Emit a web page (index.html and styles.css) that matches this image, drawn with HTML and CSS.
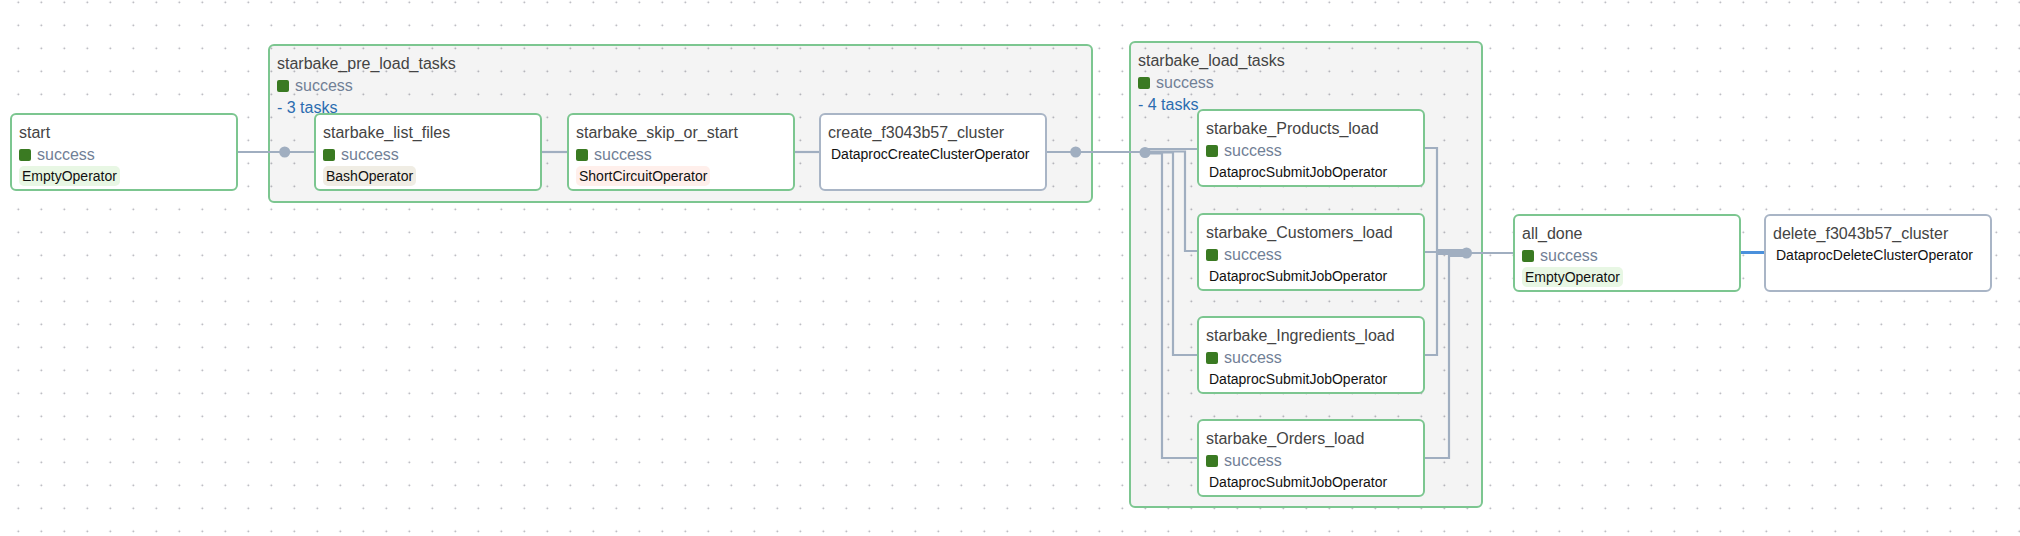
FILE: index.html
```html
<!DOCTYPE html>
<html>
<head>
<meta charset="utf-8">
<link rel="stylesheet" href="styles.css">
</head>
<body>
<div class="canvas">
  <div class="group g-pre">
    <div class="title">starbake_pre_load_tasks</div>
    <div class="state"><span class="sq"></span>success</div>
    <div class="tasks">- 3 tasks</div>
  </div>
  <div class="group g-load">
    <div class="title">starbake_load_tasks</div>
    <div class="state"><span class="sq"></span>success</div>
    <div class="tasks">- 4 tasks</div>
  </div>

  <svg class="edges" width="2020" height="536" viewBox="0 0 2020 536">
    <g fill="none" stroke="#a0aec0" stroke-width="2.2">
      <path d="M238 152 H314"/>
      <path d="M542 152 H567"/>
      <path d="M795 152 H819"/>
      <path d="M1047 152 H1145"/>
      <path d="M1145 149 H1197"/>
      <path d="M1145 151.5 H1185 V251 H1197"/>
      <path d="M1145 152.5 H1173 V355 H1197"/>
      <path d="M1145 153.5 H1162 V458 H1197"/>
      <path d="M1425 148 H1437 V250 H1466"/>
      <path d="M1425 252 H1466"/>
      <path d="M1425 355 H1437 V254 H1466"/>
      <path d="M1425 458 H1449 V256 H1466"/>
      <path d="M1466 253 H1513"/>
    </g>
    <g fill="#a0aec0">
      <circle cx="284.7" cy="152" r="5.5"/>
      <circle cx="1075.7" cy="152" r="5.5"/>
      <circle cx="1145" cy="152.5" r="5.5"/>
      <circle cx="1466.5" cy="253" r="5.5"/>
    </g>
    <path d="M1741 252.5 H1764" stroke="#4a90dc" stroke-width="3" fill="none"/>
  </svg>

  <div class="node n-start">
    <div class="title">start</div>
    <div class="state"><span class="sq"></span>success</div>
    <div class="op op-empty">EmptyOperator</div>
  </div>
  <div class="node n-list">
    <div class="title">starbake_list_files</div>
    <div class="state"><span class="sq"></span>success</div>
    <div class="op op-bash">BashOperator</div>
  </div>
  <div class="node n-skip">
    <div class="title">starbake_skip_or_start</div>
    <div class="state"><span class="sq"></span>success</div>
    <div class="op op-short">ShortCircuitOperator</div>
  </div>
  <div class="node none n-create">
    <div class="title">create_f3043b57_cluster</div>
    <div class="op">DataprocCreateClusterOperator</div>
  </div>
  <div class="node n-prod">
    <div class="title">starbake_Products_load</div>
    <div class="state"><span class="sq"></span>success</div>
    <div class="op">DataprocSubmitJobOperator</div>
  </div>
  <div class="node n-cust">
    <div class="title">starbake_Customers_load</div>
    <div class="state"><span class="sq"></span>success</div>
    <div class="op">DataprocSubmitJobOperator</div>
  </div>
  <div class="node n-ingr">
    <div class="title">starbake_Ingredients_load</div>
    <div class="state"><span class="sq"></span>success</div>
    <div class="op">DataprocSubmitJobOperator</div>
  </div>
  <div class="node n-ord">
    <div class="title">starbake_Orders_load</div>
    <div class="state"><span class="sq"></span>success</div>
    <div class="op">DataprocSubmitJobOperator</div>
  </div>
  <div class="node n-done">
    <div class="title">all_done</div>
    <div class="state"><span class="sq"></span>success</div>
    <div class="op op-empty">EmptyOperator</div>
  </div>
  <div class="node none n-del">
    <div class="title">delete_f3043b57_cluster</div>
    <div class="op">DataprocDeleteClusterOperator</div>
  </div>
</div>
</body>
</html>
```

FILE: styles.css
```css
html, body {
  margin: 0;
  padding: 0;
  background: #fff;
}

.canvas {
  position: relative;
  width: 2020px;
  height: 536px;
  overflow: hidden;
  font-family: "Liberation Sans", Arial, Helvetica, sans-serif;
  background-color: #fff;
  background-image: radial-gradient(circle, #a8a8b0 0.8px, transparent 1.1px);
  background-size: 23px 23px;
  background-position: 6.8px -9.2px;
}

.group {
  position: absolute;
  z-index: 0;
  box-sizing: border-box;
  border: 2px solid #7cc690;
  border-radius: 6px;
  background: rgba(0, 0, 0, 0.045);
  padding: 7px;
}

.g-pre { left: 268px; top: 44px; width: 825px; height: 159px; }
.g-load { left: 1129px; top: 41px; width: 354px; height: 467px; }

.edges {
  position: absolute;
  left: 0;
  top: 0;
  z-index: 1;
}

.node {
  position: absolute;
  z-index: 2;
  box-sizing: border-box;
  width: 228px;
  height: 78px;
  border: 2px solid #7cc690;
  border-radius: 6px;
  background: #fff;
  padding: 7px;
}

.node.none { border-color: #a9b5c6; }

.title {
  font-size: 16px;
  line-height: 22px;
  color: #444;
  white-space: nowrap;
}

.state {
  display: flex;
  align-items: center;
  gap: 6px;
  font-size: 16px;
  line-height: 22px;
  color: #718096;
}

.sq {
  width: 12px;
  height: 12px;
  border-radius: 2px;
  background: #3a7a22;
}

.tasks {
  font-size: 16px;
  line-height: 22px;
  color: #2b6cb0;
}

.op {
  width: fit-content;
  font-size: 14px;
  line-height: 20px;
  padding: 0 3px;
  border-radius: 5px;
  color: #111;
  white-space: nowrap;
}

.op-empty { background: #e8f7e4; }
.op-bash { background: #f0ede4; }
.op-short { background: #ffefeb; }

.n-start { left: 10px; top: 113px; }
.n-list { left: 314px; top: 113px; }
.n-skip { left: 567px; top: 113px; }
.n-create { left: 819px; top: 113px; }
.n-prod { left: 1197px; top: 109px; }
.n-cust { left: 1197px; top: 213px; }
.n-ingr { left: 1197px; top: 316px; }
.n-ord { left: 1197px; top: 419px; }
.n-done { left: 1513px; top: 214px; }
.n-del { left: 1764px; top: 214px; }
```
